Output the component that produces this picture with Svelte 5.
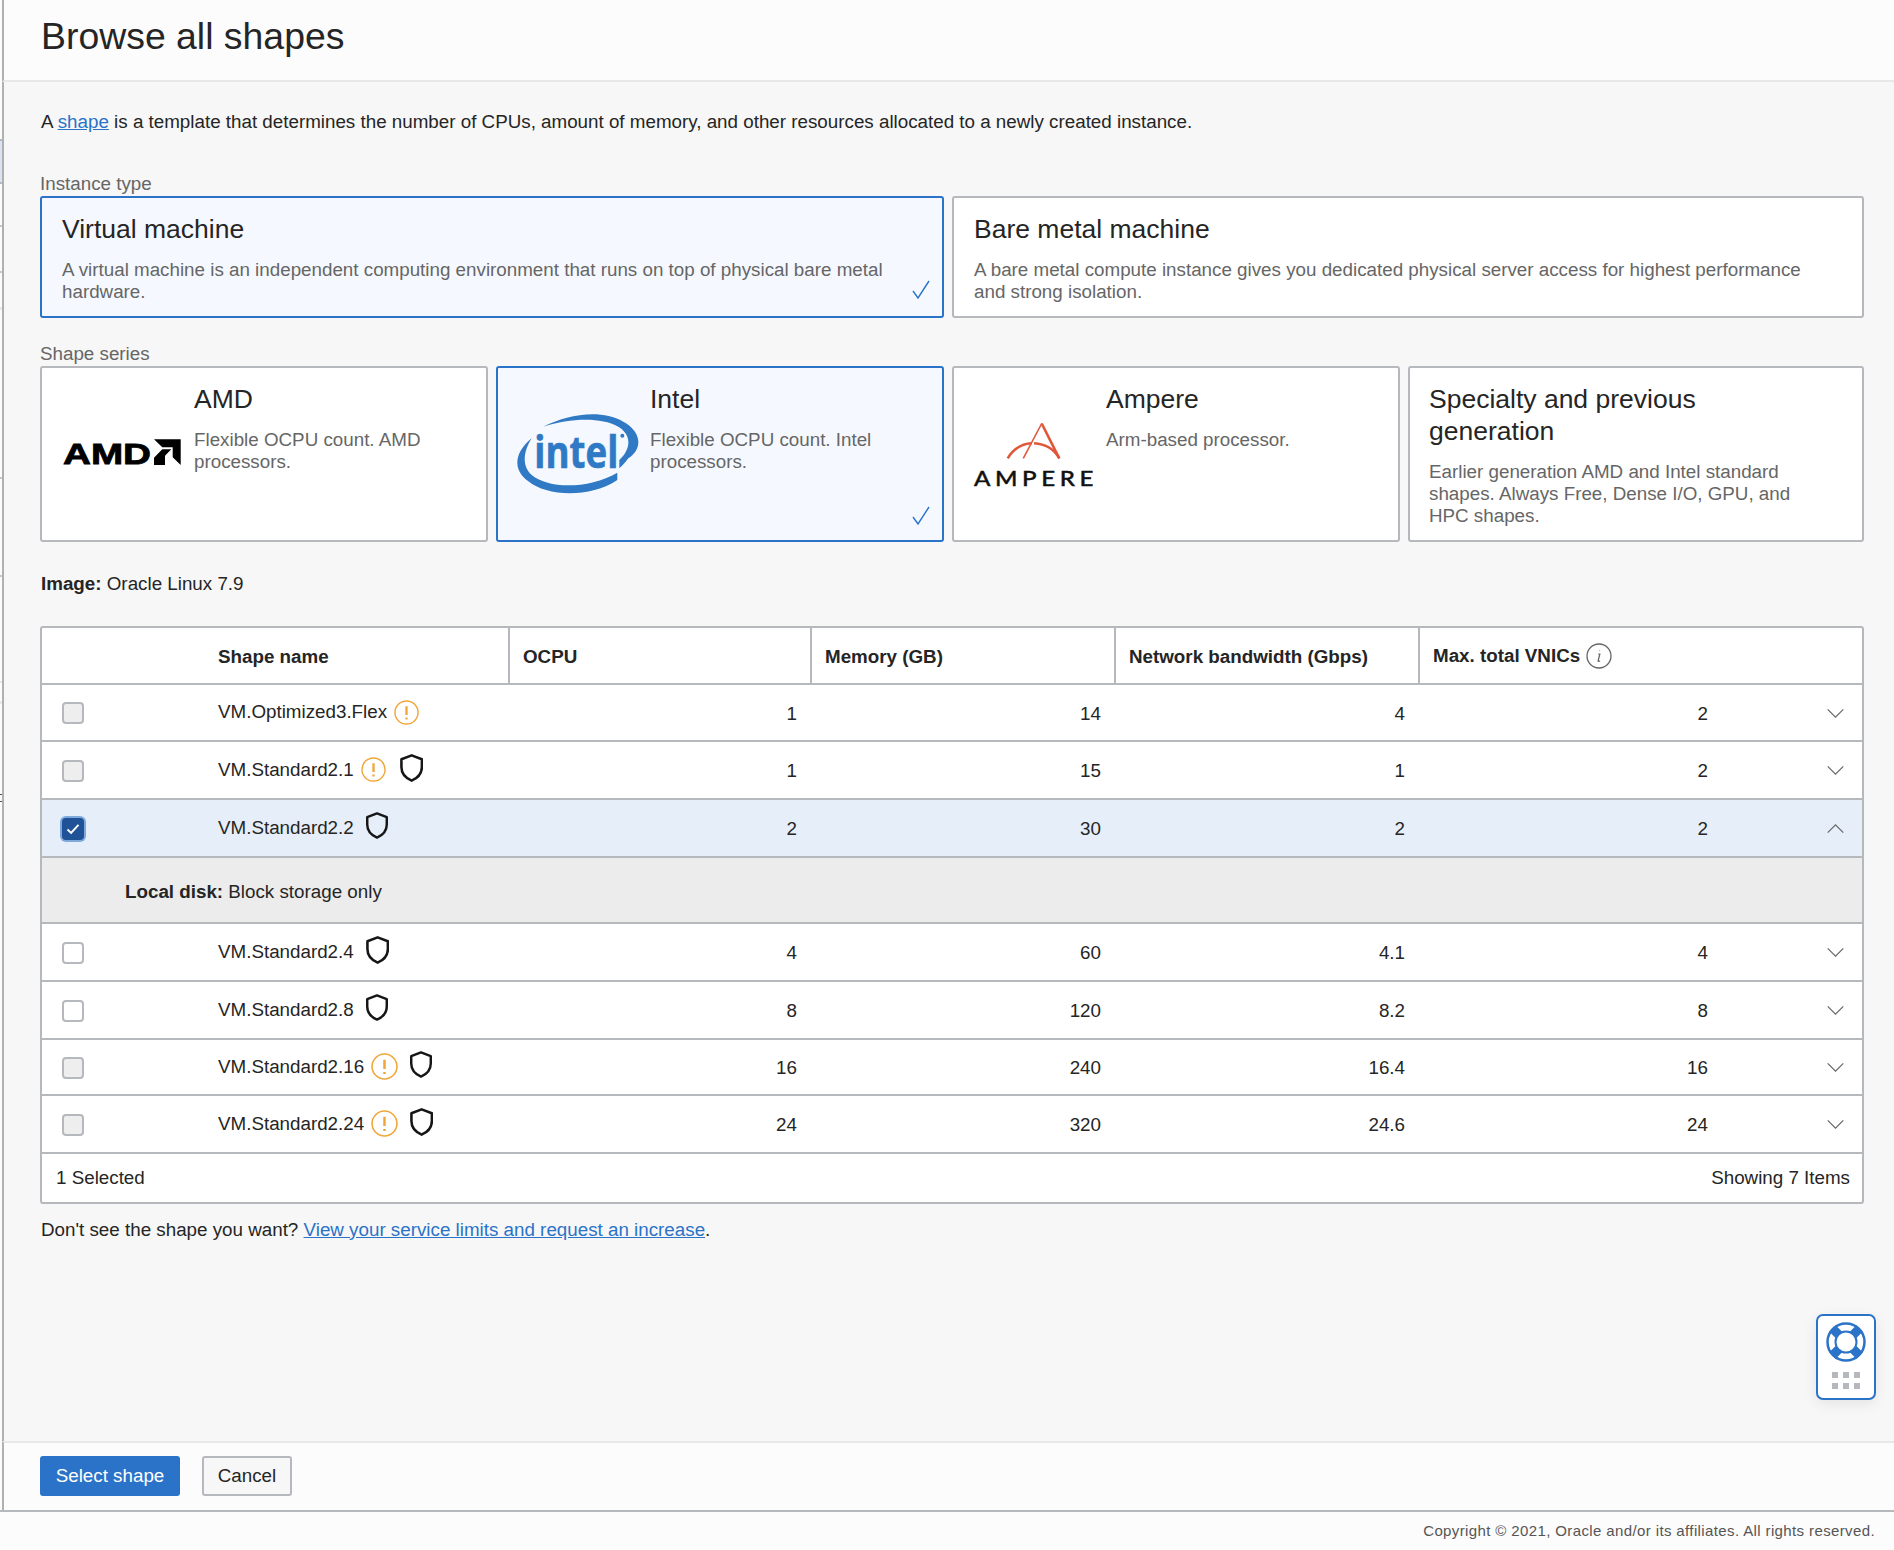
<script>
	const rows = [
		{ name: 'VM.Optimized3.Flex', warn: true, shield: false, ocpu: '1', mem: '14', net: '4', vnic: '2', disabled: true, h: 57 },
		{ name: 'VM.Standard2.1', warn: true, shield: true, big: true, ocpu: '1', mem: '15', net: '1', vnic: '2', disabled: true, h: 58 },
		{ name: 'VM.Standard2.2', warn: false, shield: true, ocpu: '2', mem: '30', net: '2', vnic: '2', checked: true, h: 58 },
		{ name: 'VM.Standard2.4', warn: false, shield: true, big: true, ocpu: '4', mem: '60', net: '4.1', vnic: '4', h: 58 },
		{ name: 'VM.Standard2.8', warn: false, shield: true, ocpu: '8', mem: '120', net: '8.2', vnic: '8', h: 58 },
		{ name: 'VM.Standard2.16', warn: true, wide: true, shield: true, ocpu: '16', mem: '240', net: '16.4', vnic: '16', disabled: true, h: 56 },
		{ name: 'VM.Standard2.24', warn: true, wide: true, shield: true, big: true, ocpu: '24', mem: '320', net: '24.6', vnic: '24', disabled: true, h: 58 }
	];

	// bits of the page behind the dialog that show at the far left edge
	const edgeMarks = [
		{ y: 139, h: 43, c: '#d8e4f4' },
		{ y: 139, h: 2, c: '#b5b8bd' },
		{ y: 182, h: 2, c: '#b5b8bd' },
		{ y: 225, h: 2, c: '#c8c8c8' },
		{ y: 271, h: 2, c: '#c8c8c8' },
		{ y: 307, h: 3, c: '#e8e8e8' },
		{ y: 477, h: 2, c: '#c8c8c8' },
		{ y: 575, h: 2, c: '#c8c8c8' },
		{ y: 681, h: 2, c: '#e8e8e8' },
		{ y: 701, h: 3, c: '#e8e8e8' },
		{ y: 794, h: 1, c: '#555' },
		{ y: 801, h: 1, c: '#555' }
	];
</script>

<div class="page">
	{#each edgeMarks as m}
		<span class="edge-mark" style="top:{m.y}px;height:{m.h}px;background:{m.c}"></span>
	{/each}

	<div class="dialog">
		<header class="head">
			<h1>Browse all shapes</h1>
		</header>

		<main class="body">
			<p class="intro">
				A <a href="#shape">shape</a> is a template that determines the number of CPUs, amount of memory,
				and other resources allocated to a newly created instance.
			</p>

			<div class="label first">Instance type</div>
			<div class="types">
				<div class="card selected type">
					<h3>Virtual machine</h3>
					<p>A virtual machine is an independent computing environment that runs on top of physical bare metal hardware.</p>
					<svg class="tick" viewBox="0 0 20 20"><path d="M2 11l5 7L18 1" /></svg>
				</div>
				<div class="card type">
					<h3>Bare metal machine</h3>
					<p>A bare metal compute instance gives you dedicated physical server access for highest performance and strong isolation.</p>
				</div>
			</div>

			<div class="label second">Shape series</div>
			<div class="series">
				<div class="card logo-card">
					<svg class="logo" viewBox="0 0 152 141">
						<text x="21" y="96" class="amd" textLength="88" lengthAdjust="spacingAndGlyphs">AMD</text>
						<path d="M112 71.300h26.700V97l-8-7.700v-10h-10.400z" />
						<path d="M112 89.700l8.300-8.400h9l-6.300 6.400V97h-11z" />
					</svg>
					<div class="copy">
						<h3>AMD</h3>
						<p>Flexible OCPU count. AMD processors.</p>
					</div>
				</div>
				<div class="card selected logo-card">
					<svg class="logo" viewBox="0 0 152 141">
						<g transform="translate(2 12) scale(.3333)">
							<path class="swoosh" d="M95 175C45 215 35 268 85 304c55 46 185 51 267-4v-22c-82 47-202 52-257 7-30-27-25-70 0-110z" />
							<path class="swoosh" d="M130 140c70-35 170-55 240-15 52 28 62 80 15 110-10 15-20 23-27 30v-25c37-35 37-75-3-100-55-30-145-25-225 0z" />
							<text x="103" y="263" class="intel" textLength="252" lengthAdjust="spacingAndGlyphs">intel</text>
							<circle class="swoosh" cx="367" cy="167" r="6" />
						</g>
					</svg>
					<div class="copy">
						<h3>Intel</h3>
						<p>Flexible OCPU count. Intel processors.</p>
					</div>
					<svg class="tick" viewBox="0 0 20 20"><path d="M2 11l5 7L18 1" /></svg>
				</div>
				<div class="card logo-card">
					<svg class="logo" viewBox="0 0 152 141">
						<path class="amp thin" d="M87.700 55.500 69.300 90.300" />
						<path class="amp" d="M87.700 55.500 105.300 90.300" />
						<path class="amp" d="M53.700 90.300C59 81 68 76 77.700 75.300" />
						<path class="amp" d="M80 75.300C91 76 100 81 105.300 90.300" />
						<text x="20" y="118" class="ampere" textLength="124" lengthAdjust="spacingAndGlyphs">AMPERE</text>
					</svg>
					<div class="copy">
						<h3>Ampere</h3>
						<p>Arm-based processor.</p>
					</div>
				</div>
				<div class="card special">
					<h3>Specialty and previous generation</h3>
					<p>Earlier generation AMD and Intel standard shapes. Always Free, Dense I/O, GPU, and HPC shapes.</p>
				</div>
			</div>

			<div class="image-line"><b>Image:</b> Oracle Linux 7.9</div>

			<div class="table-wrap">
				<table>
					<colgroup>
						<col style="width:176px" />
						<col style="width:290px" />
						<col style="width:302px" />
						<col style="width:304px" />
						<col style="width:304px" />
						<col style="width:303px" />
						<col />
					</colgroup>
					<thead>
						<tr>
							<th></th>
							<th class="name-head">Shape name</th>
							<th class="sep">OCPU</th>
							<th class="sep">Memory (GB)</th>
							<th class="sep">Network bandwidth (Gbps)</th>
							<th class="sep vnic-head" colspan="2">
								<span class="vnic-title">
									Max. total VNICs
									<svg class="info" viewBox="0 0 26 26">
										<circle cx="13" cy="13" r="12" />
										<path d="M13.600 7.600v.4M12.400 11.200h1.400l-1.600 6.400c-.2 1 .6 1.200 1.800.2" />
									</svg>
								</span>
							</th>
						</tr>
					</thead>
					<tbody>
						{#each rows as row}
							<tr class:picked={row.checked} style="height:{row.h}px">
								<td class="check">
									<span class="box" class:off={row.disabled} class:on={row.checked}>
										{#if row.checked}
											<svg viewBox="0 0 16 16"><path d="M2.500 8.500l3.600 3.400 7.400-8" /></svg>
										{/if}
									</span>
								</td>
								<td class="name">
									<span class="name-inner">
										{row.name}
										{#if row.warn}
											<svg class="warn" class:wide={row.wide} viewBox="0 0 26 26">
												<circle cx="13" cy="13" r="12" />
												<path d="M13 6.500v9M13 18.200v2" />
											</svg>
										{/if}
										{#if row.shield}
											<svg class="shield" class:spaced={row.warn} class:big={row.big} viewBox="0.750 0.300 22.500 27.400">
												<path d="M12 1.600 22 5.400V13c0 6.500-4.500 11-10 13.400C6.500 24 2 19.500 2 13V5.400z" />
											</svg>
										{/if}
									</span>
								</td>
								<td class="num">{row.ocpu}</td>
								<td class="num">{row.mem}</td>
								<td class="num">{row.net}</td>
								<td class="num">{row.vnic}</td>
								<td class="chev">
									<svg viewBox="0 0 20 12">
										<path d={row.checked ? 'M1.500 10.500 10 2l8.500 8.500' : 'M1.500 1.500 10 10l8.500-8.500'} />
									</svg>
								</td>
							</tr>
							{#if row.checked}
								<tr class="detail">
									<td colspan="7"><b>Local disk:</b> Block storage only</td>
								</tr>
							{/if}
						{/each}
					</tbody>
				</table>
				<div class="table-foot">
					<span>1 Selected</span>
					<span>Showing 7 Items</span>
				</div>
			</div>

			<p class="limits">
				Don't see the shape you want?
				<a href="#limits">View your service limits and request an increase</a>.
			</p>
		</main>

		<footer class="actions">
			<button class="primary">Select shape</button>
			<button class="plain">Cancel</button>
		</footer>
	</div>

	<div class="copyright">Copyright © 2021, Oracle and/or its affiliates. All rights reserved.</div>

	<!-- floating help widget -->
	<div class="help">
		<svg class="buoy" viewBox="0 0 40 40">
			<circle cx="20" cy="20" r="18.500" class="ring" />
			<path d="M6.500 6.500l8 8M33.500 6.500l-8 8M6.500 33.500l8-8M33.500 33.500l-8-8" class="spoke" />
			<circle cx="20" cy="20" r="10.500" class="hole" />
		</svg>
		<div class="dots">
			{#each Array(6) as _}
				<i></i>
			{/each}
		</div>
	</div>
</div>

<style>
	:global(body) {
		margin: 0;
		background: #fcfcfc;
		font-family: 'Liberation Sans', Arial, sans-serif;
		color: #252525;
	}

	.page {
		position: relative;
		width: 1894px;
		height: 1550px;
		overflow: hidden;
		background: #fcfcfc;
	}

	.edge-mark {
		position: absolute;
		left: 0;
		width: 2px;
	}

	.dialog {
		box-sizing: border-box;
		height: 1512px;
		padding-left: 2px;
		border-bottom: 2px solid #b5b8bd;
		display: flex;
		flex-direction: column;
	}

	.head,
	.body,
	.actions {
		border-left: 2px solid #b0b0b0;
	}

	.head {
		box-sizing: border-box;
		height: 82px;
		padding: 14px 37px 0;
		background: #fcfcfc;
		border-bottom: 2px solid #e8e8e8;
	}

	h1 {
		margin: 0;
		font-size: 37.400px;
		line-height: 44px;
		font-weight: 400;
	}

	.body {
		flex: 1;
		padding: 29px 30px 0 36px;
		background: #f7f7f7;
		font-size: 18.800px;
		line-height: 22px;
	}

	p {
		margin: 0;
	}

	.intro,
	.image-line,
	.limits {
		margin-left: 1px;
	}

	a {
		color: #2a73c8;
		text-decoration: underline;
	}

	.label {
		color: #666;
		height: 22px;
		line-height: 20px;
	}

	.label.first {
		margin-top: 41px;
	}

	.label.second {
		margin-top: 26px;
	}

	.types {
		display: grid;
		grid-template-columns: 904px 912px;
		gap: 8px;
	}

	.series {
		display: grid;
		grid-template-columns: 448px 448px 448px 456px;
		gap: 8px;
		height: 176px;
	}

	.card {
		position: relative;
		box-sizing: border-box;
		background: #fff;
		border: 2px solid #b5b8bd;
		border-radius: 3px;
	}

	.card.selected {
		background: #f5f9ff;
		border-color: #2a73c8;
	}

	.card h3 {
		margin: 0;
		font-size: 26.500px;
		line-height: 32px;
		font-weight: 400;
	}

	.card p {
		color: #666;
	}

	.type {
		height: 122px;
		padding: 15px 20px 0;
	}

	.type p {
		margin-top: 14px;
		padding-right: 24px;
	}

	.logo-card {
		display: flex;
	}

	.logo {
		flex: none;
		width: 152px;
		height: 141px;
	}

	.logo path {
		fill: #000;
	}

	.copy {
		padding: 15px 20px 0 0;
	}

	.copy p {
		margin-top: 14px;
	}

	.special {
		padding: 15px 50px 0 19px;
	}

	.special p {
		margin-top: 14px;
	}

	.amd {
		font-weight: 700;
		font-size: 30px;
		stroke: #000;
		stroke-width: 0.8px;
	}

	.logo .swoosh {
		fill: #3079c4;
	}

	.intel {
		font-family: 'Open Sans', sans-serif;
		font-weight: 700;
		font-size: 132px;
		fill: #3079c4;
		stroke: #3079c4;
		stroke-width: 2px;
	}

	.logo .amp {
		fill: none;
		stroke: #e0573a;
		stroke-width: 2.600;
	}

	.logo .amp.thin {
		stroke-width: 1.600;
	}

	.ampere {
		font-family: Lato, sans-serif;
		font-size: 21px;
		font-weight: 500;
		letter-spacing: 4px;
		fill: #111;
		stroke: #111;
		stroke-width: 0.4px;
	}

	.tick {
		position: absolute;
		right: 11px;
		bottom: 16px;
		width: 20px;
		height: 20px;
	}

	.logo-card .tick {
		bottom: 14px;
	}

	.tick path {
		fill: none;
		stroke: #2a73c8;
		stroke-width: 1.400;
	}

	.image-line {
		margin-top: 31px;
	}

	.table-wrap {
		box-sizing: border-box;
		height: 578px;
		margin-top: 31px;
		background: #fff;
		border: 2px solid #b5b8bd;
		border-radius: 3px;
	}

	table {
		width: 100%;
		table-layout: fixed;
		border-collapse: separate;
		border-spacing: 0;
	}

	th,
	td {
		box-sizing: border-box;
		padding: 0;
		border-bottom: 2px solid #b5b8bd;
	}

	thead tr {
		height: 57px;
	}

	th {
		text-align: left;
		font-weight: 700;
		padding-top: 3px;
	}

	th.sep {
		padding-left: 13px;
		border-left: 2px solid #b5b8bd;
	}

	.vnic-head {
		padding-top: 0;
	}

	.vnic-title {
		display: flex;
		align-items: center;
		gap: 6px;
	}

	.info {
		width: 26px;
		height: 26px;
	}

	.info circle,
	.info path {
		fill: none;
		stroke: #666;
		stroke-width: 1.300;
	}

	.check {
		padding: 1px 0 0 20px;
	}

	.box {
		display: flex;
		align-items: center;
		justify-content: center;
		box-sizing: border-box;
		width: 22px;
		height: 22px;
		background: #fff;
		border: 2px solid #b5b8bd;
		border-radius: 4px;
	}

	.box.off {
		background: #eeeeee;
	}

	.box.on {
		background: #1f5296;
		border-color: #1f5296;
		box-shadow: 0 0 0 2px #7fa8dc;
	}

	.box svg {
		width: 16px;
		height: 16px;
	}

	.box path {
		fill: none;
		stroke: #fff;
		stroke-width: 2;
	}

	.name-inner {
		display: flex;
		align-items: center;
		gap: 7px;
		height: 30px;
		margin-top: -1px;
	}

	.warn {
		width: 25px;
		height: 25px;
		flex: none;
	}

	.warn.wide {
		width: 27px;
		height: 27px;
		margin-right: -2px;
	}

	.warn circle {
		fill: none;
		stroke: #f0a63a;
		stroke-width: 1.500;
	}

	.warn path {
		fill: none;
		stroke: #f0a63a;
		stroke-width: 2.400;
	}

	.shield {
		width: 22px;
		height: 27px;
		flex: none;
		margin: -4px 0 0 5px;
	}

	.shield.big {
		width: 23.300px;
		height: 28px;
	}

	.shield.spaced {
		margin-left: 7px;
	}

	.shield path {
		fill: none;
		stroke: #161616;
		stroke-width: 2.500;
		stroke-linejoin: round;
	}

	.num {
		text-align: right;
		padding: 2px 13px 0 0;
	}

	.chev {
		padding: 1px 0 0 105px;
	}

	.chev svg {
		display: block;
		width: 19px;
		height: 11px;
	}

	.chev path {
		fill: none;
		stroke: #666;
		stroke-width: 1.300;
	}

	tr.picked td {
		background: #e6eff9;
	}

	.detail {
		height: 66px;
	}

	.detail td {
		background: #ececec;
		padding: 4px 0 0 83px;
	}

	.table-foot {
		display: flex;
		justify-content: space-between;
		padding: 13px 12px 0 14px;
	}

	.limits {
		margin-top: 15px;
	}

	.actions {
		box-sizing: border-box;
		height: 69px;
		padding: 13px 36px 0;
		background: #fcfcfc;
		border-top: 2px solid #e8e8e8;
		display: flex;
		gap: 22px;
	}

	button {
		box-sizing: border-box;
		height: 40px;
		font: inherit;
		font-size: 18.800px;
		border-radius: 3px;
		padding: 0;
	}

	.primary {
		width: 140px;
		background: #2a73c8;
		color: #fff;
		border: none;
	}

	.plain {
		width: 90px;
		background: #f7f7f7;
		color: #252525;
		border: 2px solid #b5b8bd;
	}

	.copyright {
		padding: 10px 19px 0 0;
		text-align: right;
		font-size: 15px;
		line-height: 18px;
		letter-spacing: 0.38px;
		color: #555;
	}

	.help {
		position: absolute;
		left: 1816px;
		top: 1314px;
		box-sizing: border-box;
		width: 60px;
		height: 86px;
		padding: 6px 0 0;
		background: #fff;
		border: 2px solid #2a73c8;
		border-radius: 7px;
		box-shadow: 0 4px 14px rgba(0, 0, 0, 0.08);
	}

	.buoy {
		display: block;
		width: 40px;
		height: 40px;
		margin: 0 auto;
	}

	.ring {
		fill: #fff;
		stroke: #2a73c8;
		stroke-width: 2.500;
	}

	.hole {
		fill: #fff;
		stroke: #2a73c8;
		stroke-width: 2;
	}

	.spoke {
		fill: none;
		stroke: #2a73c8;
		stroke-width: 9;
	}

	.dots {
		display: grid;
		grid-template-columns: repeat(3, 6px);
		gap: 5px;
		justify-content: center;
		margin-top: 10px;
	}

	.dots i {
		width: 6px;
		height: 6px;
		background: #b5b8bd;
	}
</style>
